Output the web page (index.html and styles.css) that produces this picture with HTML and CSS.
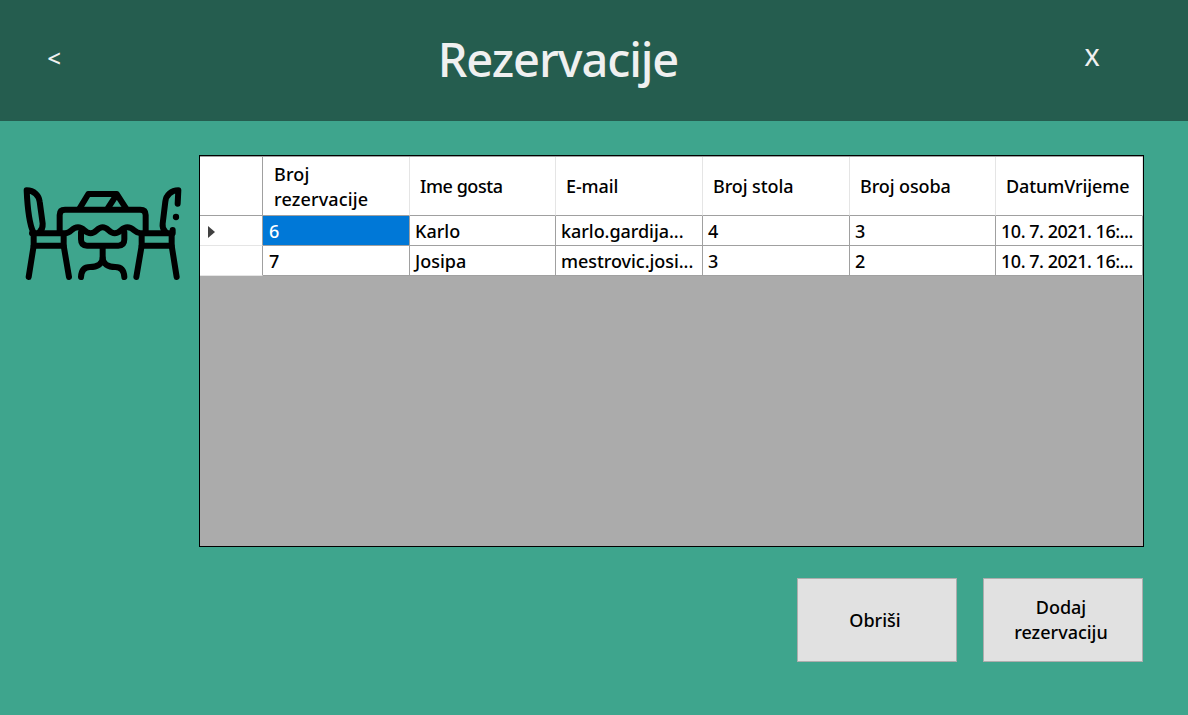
FILE: index.html
```html
<!DOCTYPE html>
<html lang="hr">
<head>
<meta charset="utf-8">
<title>Rezervacije</title>
<link rel="stylesheet" href="styles.css">
</head>
<body>
<header class="topbar">
  <span class="back">&lt;</span>
  <h1 class="title">Rezervacije</h1>
  <span class="close">X</span>
</header>
<main class="content">
  <svg class="logo" viewBox="0 0 570 345" fill="none" stroke="#000" stroke-width="18" stroke-linecap="round" stroke-linejoin="round">
    <path d="M70 172C55 140 52 90 50 46C72 46 87 62 89 80L98 146Q99 162 88 172"/>
    <path d="M149 170V120Q149 104 165 104H391Q407 104 407 120V170"/>
    <path d="M209 100L235 57H320L348 100M318 62L294 99"/>
    <path d="M66 175H165C184 175 184 157 204 157C222 157 224 175 242 175C258 175 262 157 278 157C294 157 298 175 314 175C332 175 334 157 352 157C372 157 374 175 392 175H488"/>
    <path d="M71 178V212H161V178M395 178V212H485V178"/>
    <path d="M71 212L56 306M161 212L177 306M395 212L379 306M485 212L500 306"/>
    <path d="M213 172V193Q213 212 231 212H325Q343 212 343 193V172M278 214V250"/>
    <path d="M213 306C214 286 222 276 240 276C262 276 278 266 278 250C278 266 294 276 316 276C334 276 342 286 343 306"/>
    <path d="M466 170Q456 160 458 146L466 80C468 60 484 46 505 46L503 86M488 165V168"/>
    <circle cx="498" cy="126" r="9.5" fill="#000" stroke="none"/>
  </svg>
  <section class="panel">
    <div class="grid">
      <div class="row head">
        <span class="cell"></span><span class="cell wide">Broj<br>rezervacije</span><span class="cell tight">Ime gosta</span><span class="cell">E-mail</span><span class="cell">Broj stola</span><span class="cell">Broj osoba</span><span class="cell">DatumVrijeme</span>
      </div>
      <div class="row">
        <span class="cell rowhead"><i class="marker"></i></span><span class="cell selected">6</span><span class="cell">Karlo</span><span class="cell mail">karlo.gardija...</span><span class="cell">4</span><span class="cell">3</span><span class="cell date">10. 7. 2021. 16:...</span>
      </div>
      <div class="row">
        <span class="cell rowhead"></span><span class="cell">7</span><span class="cell">Josipa</span><span class="cell mail">mestrovic.josi...</span><span class="cell">3</span><span class="cell">2</span><span class="cell date">10. 7. 2021. 16:...</span>
      </div>
    </div>
    <div class="actions">
      <button class="btn">Obriši</button>
      <button class="btn">Dodaj<br>rezervaciju</button>
    </div>
  </section>
</main>
</body>
</html>
```
FILE: styles.css
```css
* { box-sizing: border-box; }
body {
  margin: 0;
  height: 715px;
  overflow: hidden;
  background: #3ea58d;
  color: #000;
  font: 500 18px/25px "Noto Sans", "Open Sans", sans-serif;
}
.topbar {
  display: grid;
  grid-template-columns: 60px 1fr 60px;
  align-items: center;
  height: 121px;
  padding: 0 66px 0 24px;
  background: #255d4f;
  color: #f0f0f0;
}
.back, .close {
  padding-bottom: 6px;
  text-align: center;
  font-size: 24px;
  font-weight: 500;
}
.close { padding-bottom: 8px; }
.title {
  margin: 0;
  padding: 0 30px 3px 0;
  text-align: center;
  font-size: 47px;
  font-weight: 500;
  line-height: 60px;
  letter-spacing: -1.1px;
}
.content {
  display: flex;
  padding: 34px 44px 0 10px;
}
.logo {
  flex: none;
  width: 190px;
  height: 115px;
  margin: 20px -1px 0 0;
}
.panel { width: 945px; }
.grid {
  height: 392px;
  border: 1px solid #000;
  background: #ababab;
}
.row {
  display: grid;
  grid-template-columns: 63px 147px 146px 147px 147px 146px 147px;
  height: 30px;
}
.head { height: 60px; border-top: 1px solid #a0a0a0; }
.cell {
  display: flex;
  align-items: center;
  padding: 2px 0 0 5px;
  border-right: 1px solid #a0a0a0;
  border-bottom: 1px solid #a0a0a0;
  background: #fff;
  white-space: nowrap;
}
.cell:nth-child(2) { padding-left: 6px; }
.head .cell { padding: 1px 0 0 10px; border-right-color: #e5e5e5; }
.head .cell:first-child { border-right-color: #a0a0a0; }
.head .tight { letter-spacing: -0.45px; }
.head .wide { padding: 2px 0 0 11px; letter-spacing: 0.15px; }
.head .cell:nth-child(n+4) { letter-spacing: -0.1px; }
.mail { letter-spacing: -0.05px; }
.date { letter-spacing: -0.48px; }
.row .rowhead { border-bottom-color: #e5e5e5; padding-left: 8px; }
.marker {
  border: 6px solid transparent;
  border-left: 7px solid #404040;
  border-right: 0;
}
.row .selected { background: #0078d7; color: #fff; }
.actions {
  display: flex;
  justify-content: flex-end;
  gap: 26px;
  padding: 31px 1px 0 0;
}
.btn {
  width: 160px;
  height: 84px;
  padding: 0 4px 0 0;
  border: 1px solid #adadad;
  background: #e1e1e1;
  color: #000;
  font: inherit;
}
```
